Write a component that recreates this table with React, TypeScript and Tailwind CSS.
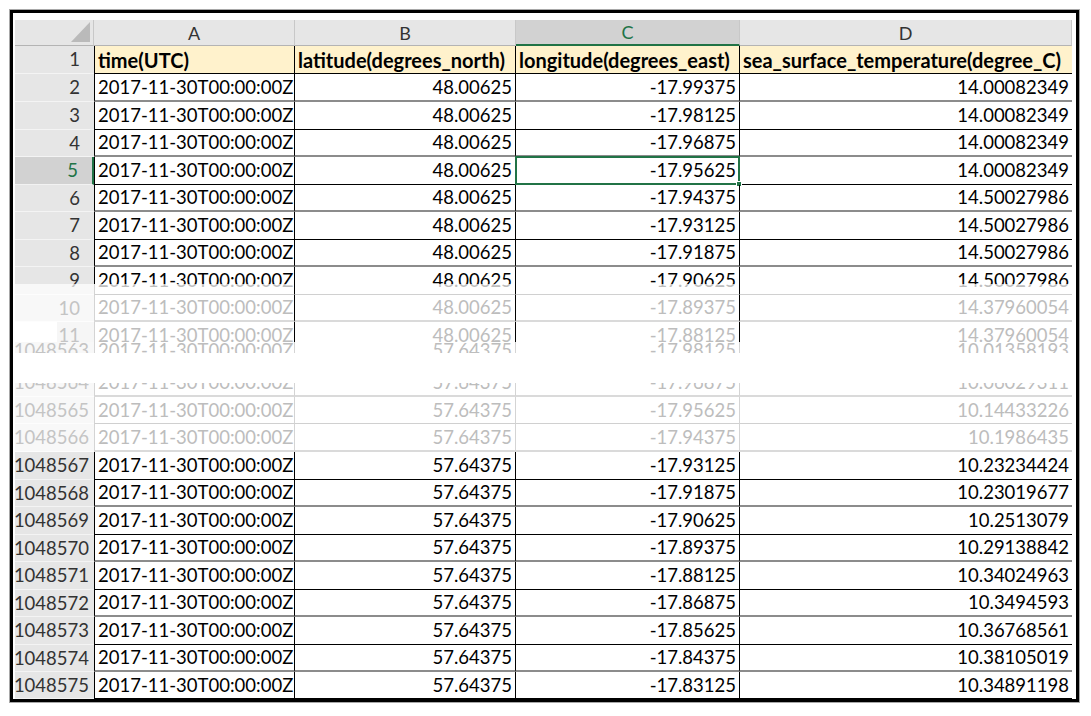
import React from 'react';

type Tone = 'normal' | 'fadeTop' | 'fade';

interface SheetRow {
  n: string;
  h: 27 | 28;
  a: string;
  b: string;
  c: string;
  d: string;
}

const T = '2017-11-30T00:00:00Z';
const COLS = 'grid grid-cols-[79px_201px_221px_224px_332px]';

const topRows: SheetRow[] = [
  { n: '2', h: 28, a: T, b: '48.00625', c: '-17.99375', d: '14.00082349' },
  { n: '3', h: 28, a: T, b: '48.00625', c: '-17.98125', d: '14.00082349' },
  { n: '4', h: 27, a: T, b: '48.00625', c: '-17.96875', d: '14.00082349' },
  { n: '5', h: 28, a: T, b: '48.00625', c: '-17.95625', d: '14.00082349' },
  { n: '6', h: 27, a: T, b: '48.00625', c: '-17.94375', d: '14.50027986' },
  { n: '7', h: 28, a: T, b: '48.00625', c: '-17.93125', d: '14.50027986' },
  { n: '8', h: 27, a: T, b: '48.00625', c: '-17.91875', d: '14.50027986' },
  { n: '9', h: 28, a: T, b: '48.00625', c: '-17.90625', d: '14.50027986' },
  { n: '10', h: 27, a: T, b: '48.00625', c: '-17.89375', d: '14.37960054' },
  { n: '11', h: 28, a: T, b: '48.00625', c: '-17.88125', d: '14.37960054' },
];

const bottomRows: SheetRow[] = [
  { n: '1048563', h: 27, a: T, b: '57.64375', c: '-17.98125', d: '10.01358193' },
  { n: '1048564', h: 28, a: T, b: '57.64375', c: '-17.96875', d: '10.06029311' },
  { n: '1048565', h: 27, a: T, b: '57.64375', c: '-17.95625', d: '10.14433226' },
  { n: '1048566', h: 28, a: T, b: '57.64375', c: '-17.94375', d: '10.1986435' },
  { n: '1048567', h: 28, a: T, b: '57.64375', c: '-17.93125', d: '10.23234424' },
  { n: '1048568', h: 27, a: T, b: '57.64375', c: '-17.91875', d: '10.23019677' },
  { n: '1048569', h: 28, a: T, b: '57.64375', c: '-17.90625', d: '10.2513079' },
  { n: '1048570', h: 27, a: T, b: '57.64375', c: '-17.89375', d: '10.29138842' },
  { n: '1048571', h: 28, a: T, b: '57.64375', c: '-17.88125', d: '10.34024963' },
  { n: '1048572', h: 27, a: T, b: '57.64375', c: '-17.86875', d: '10.3494593' },
  { n: '1048573', h: 28, a: T, b: '57.64375', c: '-17.85625', d: '10.36768561' },
  { n: '1048574', h: 27, a: T, b: '57.64375', c: '-17.84375', d: '10.38105019' },
  { n: '1048575', h: 27, a: T, b: '57.64375', c: '-17.83125', d: '10.34891198' },
];

const Row: React.FC<{ row: SheetRow; tone?: Tone; wide?: boolean }> = ({ row, tone = 'normal', wide }) => {
  const even = Number(row.n.slice(-1)) % 2 === 0;
  const faded = tone !== 'normal';
  const active = row.n === '5';
  const torn = row.n === '11';

  // downscaled cell borders come out as 2px grey on every other row
  const hline = faded
    ? even ? 'border-b-2 border-b-[#dadada]' : 'border-b border-b-[#d0d0d0]'
    : even ? 'border-b-2 border-b-[#8c8c8c]' : 'border-b border-b-black';
  const vline = tone === 'fade' ? 'border-r-[#d4d4d4]' : 'border-r-black';
  const ink = faded ? 'text-[#bdbdbd]' : 'text-black';

  const head = faded
    ? `${torn ? 'bg-[linear-gradient(to_right,#ffffff_42px,#f6f6f6_42px)]' : 'bg-[#f8f8f8]'} text-[#c4c4c4] border-b-[#fdfdfd]`
    : active
      ? 'bg-[#d2d2d2] text-[#217346] border-b-[#f2f2f2] border-r-2 border-r-[#217346]'
      : 'bg-[#e6e6e6] text-[#333] border-b-[#f4f4f4]';

  return (
    <div className={`${COLS} ${row.h === 28 ? 'h-[28px]' : 'h-[27px]'} ${ink}`}>
      <div className={`flex items-center justify-end border-b ${head} ${wide ? 'pr-[5px]' : 'pr-[14px]'}`}>{row.n}</div>
      <div className={`flex items-center pl-[3px] border-l border-r ${faded ? 'border-l-[#d4d4d4]' : 'border-l-black'} ${vline} ${hline}`}>{row.a}</div>
      <div className={`flex items-center justify-end pr-[3px] border-r ${vline} ${hline}`}>{row.b}</div>
      <div className={`relative flex items-center justify-end pr-[3px] border-r ${vline} ${hline}`}>
        {row.c}
        {active && tone === 'normal' && (
          <div className="absolute -left-px -top-px -right-px -bottom-px border-2 border-[#217346]">
            <div className="absolute -right-[4px] -bottom-[4px] w-[6px] h-[6px] bg-[#217346] border border-white" />
          </div>
        )}
      </div>
      <div className={`flex items-center justify-end pr-[3px] ${hline}`}>{row.d}</div>
    </div>
  );
};

const App: React.FC = () => {
  const colHead = 'flex items-center justify-center border-r border-b border-r-[#c8c8c8] border-b-[#b4b4b4] bg-[#e6e6e6] text-[#333]';
  const title = 'flex items-center pl-[3px] bg-[#fff2cc] border-b border-black whitespace-nowrap overflow-hidden';

  return (
    <div className="min-h-[716px] bg-white pt-[9px] pl-[9px] font-['Lato',sans-serif] text-[18.5px] leading-none">
      <div className="w-fit border border-[#a8a8a8]">
        <div className="border-[3px] border-black bg-white pt-[7px] pl-[2px] pr-[4px]">
          {/* column letters */}
          <div className={`${COLS} h-[26px] text-[18px]`}>
            <div className="flex items-end justify-end pr-[3px] pb-[3px] bg-[#e6e6e6] border-r border-b border-r-[#c8c8c8] border-b-[#b4b4b4]">
              <svg width="19" height="20" viewBox="0 0 19 20">
                <polygon points="19,0 19,20 0,20" fill="#bababa" />
              </svg>
            </div>
            <div className={colHead}>A</div>
            <div className={colHead}>B</div>
            <div className="flex items-center justify-center border-r border-r-[#c8c8c8] border-b-2 border-b-[#217346] bg-[#d2d2d2] text-[#217346]">C</div>
            <div className={colHead}>D</div>
          </div>

          {/* rows 1 - 9 */}
          <div className="h-[238px] overflow-hidden">
            <div className={`${COLS} h-[28px] font-bold text-[20px] text-black`}>
              <div className="flex items-center justify-end pr-[14px] bg-[#e6e6e6] text-[#333] text-[18.5px] font-normal border-b border-b-[#f4f4f4]">1</div>
              <div className={`${title} border-l border-r`}>time(UTC)</div>
              <div className={`${title} border-r`}>latitude(degrees_north)</div>
              <div className={`${title} border-r`}>longitude(degrees_east)</div>
              <div className={title}>sea_surface_temperature(degree_C)</div>
            </div>
            {topRows.slice(0, 8).map((r) => (
              <Row key={r.n} row={r} />
            ))}
          </div>

          {/* faded tear, rows 9 - 11 */}
          <div className="h-[58px] overflow-hidden">
            <div className="-mt-[17px]">
              {topRows.slice(7).map((r) => (
                <Row key={r.n} row={r} tone="fadeTop" />
              ))}
            </div>
          </div>

          <div className="h-[11px] overflow-hidden">
            <div className="-mt-[5px]">
              <Row row={bottomRows[0]} tone="fade" wide />
            </div>
          </div>

          <div className="h-[30px]" />

          <div className="h-[69px] overflow-hidden">
            <div className="-mt-[14px]">
              {bottomRows.slice(1, 4).map((r) => (
                <Row key={r.n} row={r} tone="fade" wide />
              ))}
            </div>
          </div>

          {/* rows 1048567 - 1048575 */}
          {bottomRows.slice(4).map((r) => (
            <Row key={r.n} row={r} wide />
          ))}
        </div>
      </div>
    </div>
  );
};

export default App;
